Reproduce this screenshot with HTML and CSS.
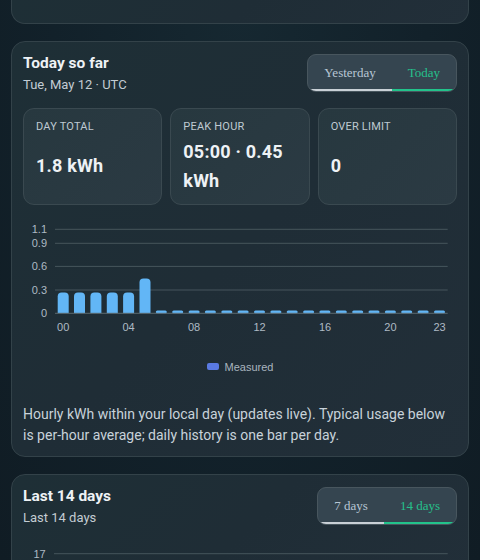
FILE: index.html
```html
<!DOCTYPE html>
<html lang="en">
<head>
<meta charset="utf-8">
<title>Usage</title>
<link rel="stylesheet" href="styles.css">
</head>
<body>
<main class="page">
  <section class="card card-cut"></section>

  <section class="card card-today">
    <header class="card-head">
      <div class="titles">
        <h2 class="title">Today so far</h2>
        <p class="sub">Tue, May 12 · UTC</p>
      </div>
      <div class="toggle">
        <button class="tbtn">Yesterday</button>
        <button class="tbtn active">Today</button>
      </div>
    </header>

    <div class="tiles">
      <div class="tile">
        <div class="tile-label">DAY TOTAL</div>
        <div class="tile-value">1.8 kWh</div>
      </div>
      <div class="tile">
        <div class="tile-label">PEAK HOUR</div>
        <div class="tile-value">05:00 · 0.45 kWh</div>
      </div>
      <div class="tile">
        <div class="tile-label">OVER LIMIT</div>
        <div class="tile-value">0</div>
      </div>
    </div>

    <svg class="chart" width="434" height="121" viewBox="0 0 434 121">
      <g class="grid">
        <line x1="32" y1="12.3" x2="424.7" y2="12.3"/>
        <line x1="32" y1="26.3" x2="424.7" y2="26.3"/>
        <line x1="32" y1="49.4" x2="424.7" y2="49.4"/>
        <line x1="32" y1="73" x2="424.7" y2="73"/>
      </g>
      <g class="ylab">
        <text x="24" y="16.3">1.1</text>
        <text x="24" y="30.3">0.9</text>
        <text x="24" y="53.4">0.6</text>
        <text x="24" y="77">0.3</text>
        <text x="24" y="100.3">0</text>
      </g>
      <g class="bars">
        <path d="M34.7 96.3V79.5Q34.7 75.5 38.7 75.5H41.7Q45.7 75.5 45.7 79.5V96.3Z"/>
        <path d="M51 96.3V79.5Q51 75.5 55 75.5H58Q62 75.5 62 79.5V96.3Z"/>
        <path d="M67.4 96.3V79.5Q67.4 75.5 71.4 75.5H74.4Q78.4 75.5 78.4 79.5V96.3Z"/>
        <path d="M83.8 96.3V79.5Q83.8 75.5 87.8 75.5H90.8Q94.8 75.5 94.8 79.5V96.3Z"/>
        <path d="M100.1 96.3V79.5Q100.1 75.5 104.1 75.5H107.1Q111.1 75.5 111.1 79.5V96.3Z"/>
        <path d="M116.5 96.3V65.6Q116.5 61.6 120.5 61.6H123.5Q127.5 61.6 127.5 65.6V96.3Z"/>
        <rect x="132.8" y="93.5" width="11" height="3" rx="1.5"/>
        <rect x="149.2" y="93.5" width="11" height="3" rx="1.5"/>
        <rect x="165.6" y="93.5" width="11" height="3" rx="1.5"/>
        <rect x="181.9" y="93.5" width="11" height="3" rx="1.5"/>
        <rect x="198.3" y="93.5" width="11" height="3" rx="1.5"/>
        <rect x="214.6" y="93.5" width="11" height="3" rx="1.5"/>
        <rect x="231" y="93.5" width="11" height="3" rx="1.5"/>
        <rect x="247.4" y="93.5" width="11" height="3" rx="1.5"/>
        <rect x="263.7" y="93.5" width="11" height="3" rx="1.5"/>
        <rect x="280.1" y="93.5" width="11" height="3" rx="1.5"/>
        <rect x="296.4" y="93.5" width="11" height="3" rx="1.5"/>
        <rect x="312.8" y="93.5" width="11" height="3" rx="1.5"/>
        <rect x="329.2" y="93.5" width="11" height="3" rx="1.5"/>
        <rect x="345.5" y="93.5" width="11" height="3" rx="1.5"/>
        <rect x="361.9" y="93.5" width="11" height="3" rx="1.5"/>
        <rect x="378.2" y="93.5" width="11" height="3" rx="1.5"/>
        <rect x="394.6" y="93.5" width="11" height="3" rx="1.5"/>
        <rect x="411" y="93.5" width="11" height="3" rx="1.5"/>
      </g>
      <line class="axis" x1="32" y1="96.3" x2="424.7" y2="96.3"/>
      <g class="xlab">
        <text x="40.2" y="113.5">00</text>
        <text x="105.6" y="113.5">04</text>
        <text x="171.1" y="113.5">08</text>
        <text x="236.5" y="113.5">12</text>
        <text x="302" y="113.5">16</text>
        <text x="367.4" y="113.5">20</text>
        <text x="416.5" y="113.5">23</text>
      </g>
    </svg>

    <div class="legend">
      <span class="swatch"></span>
      <span class="legend-text">Measured</span>
    </div>

    <p class="note">Hourly kWh within your local day (updates live). Typical usage below is per-hour average; daily history is one bar per day.</p>
  </section>

  <section class="card">
    <header class="card-head">
      <div class="titles">
        <h2 class="title">Last 14 days</h2>
        <p class="sub">Last 14 days</p>
      </div>
      <div class="toggle">
        <button class="tbtn">7 days</button>
        <button class="tbtn active">14 days</button>
      </div>
    </header>
    <svg class="chart" width="434" height="40" viewBox="0 0 434 40">
      <line class="gridline" x1="31" y1="12.7" x2="424.7" y2="12.7"/>
      <text class="ylab-t" x="22.7" y="16.7">17</text>
    </svg>
  </section>
</main>
</body>
</html>
```

FILE: styles.css
```css
* { box-sizing: border-box; }

html, body {
  margin: 0;
  height: 100%;
  overflow: hidden;
}

body {
  background: radial-gradient(ellipse at 50% 0%, #162831 0%, #12212a 55%, #101c24 100%);
  font-family: "Roboto", "Liberation Sans", sans-serif;
  color: #e6ecf0;
}

.page {
  display: flex;
  flex-direction: column;
  gap: 17px;
  padding: 0 11px;
}

.card {
  background: linear-gradient(135deg, #1e2f36 0%, #1f2d36 50%, #222f39 100%);
  border: 1px solid #334249;
  border-radius: 14px;
  padding: 12px 11px;
}

.card-cut {
  height: 24px;
  border-top: none;
  border-radius: 0 0 14px 14px;
  padding: 0;
}

.card-today {
  padding-bottom: 10px;
}

.card-head {
  display: flex;
  justify-content: space-between;
  align-items: flex-start;
  margin-bottom: 14px;
}

.title {
  margin: 0;
  font-size: 15.5px;
  line-height: 18px;
  font-weight: 700;
  color: #eef2f5;
}

.sub {
  margin: 4px 0 0;
  font-size: 13px;
  line-height: 18px;
  color: #c3ccd3;
}

.toggle {
  display: flex;
  background: #354550;
  border: 1px solid #48565e;
  border-radius: 9px;
  overflow: hidden;
}

.tbtn {
  font-family: "Liberation Serif", serif;
  font-size: 13px;
  line-height: 18px;
  padding: 9px 16px 7px;
  background: transparent;
  border: none;
  border-bottom: 2px solid #c9d0d6;
  color: #b8c6d4;
  margin: 0;
}

.tbtn.active {
  color: #25c08c;
  border-bottom-color: #22c38b;
}

.tiles {
  display: grid;
  grid-template-columns: repeat(3, 1fr);
  gap: 8px;
}

.tile {
  display: flex;
  flex-direction: column;
  background: linear-gradient(135deg, #27383f 0%, #2b3a43 100%);
  border: 1px solid #3a4950;
  border-radius: 11px;
  padding: 11px 12px 8px;
  min-height: 96px;
}

.tile-label {
  font-size: 11px;
  line-height: 14px;
  color: #bfcad2;
  letter-spacing: 0.2px;
}

.tile-value {
  flex: 1;
  display: flex;
  align-items: center;
  margin-top: 4px;
  font-size: 18px;
  line-height: 1.6;
  font-weight: 700;
  color: #eef2f5;
  letter-spacing: 0.2px;
}

.chart {
  display: block;
  margin-top: 12px;
  font-family: "Liberation Sans", Arial, sans-serif;
  font-size: 11px;
}

.grid line, .gridline {
  stroke: #46555c;
  stroke-width: 1;
}

.axis {
  stroke: #5a686e;
  stroke-width: 1;
}

.ylab text, .ylab-t {
  fill: #aebac4;
  text-anchor: end;
}

.xlab text {
  fill: #aebac4;
  text-anchor: middle;
}

.bars path, .bars rect {
  fill: #62b6f6;
}

.legend {
  display: flex;
  justify-content: center;
  align-items: center;
  gap: 6px;
  margin-top: 22px;
  height: 14px;
}

.swatch {
  width: 12px;
  height: 7px;
  border-radius: 2px;
  background: #5a7ae2;
}

.legend-text {
  font-family: "Liberation Sans", Arial, sans-serif;
  font-size: 11px;
  color: #a9b5bf;
}

.note {
  margin: 30px 0 0;
  font-size: 14px;
  line-height: 21px;
  color: #c8d2da;
}
```
